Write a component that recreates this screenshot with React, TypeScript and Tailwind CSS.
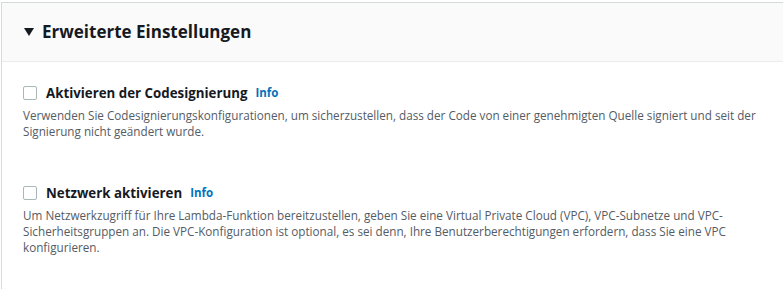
export default function App() {
  return (
    <main className="h-[289px] w-[783px] overflow-hidden bg-white font-['Open_Sans',sans-serif]">
      <section className="ml-px mt-[2px] h-[300px] border-l border-t border-[#d5dbdb] bg-white">
        <div className="flex h-[59px] items-center gap-[8px] border-b border-[#eaeded] bg-[#fafafa] pl-[22px]">
          <svg width="10" height="9" viewBox="0 0 10 9" className="mt-px">
            <path d="M0 0 H10 L5 8 Z" fill="#16191f" />
          </svg>
          <h2 className="text-[17px] font-bold text-[#16191f]">Erweiterte Einstellungen</h2>
        </div>

        <div className="px-[21px] pt-[22px]">
          <div className="flex items-center">
            <span className="h-[14px] w-[14px] rounded-[2px] border border-[#aab7b8] bg-white" />
            <span className="ml-[9px] text-[13.3px] leading-[18px] font-bold text-[#16191f]">Aktivieren der Codesignierung</span>
            <span className="ml-[8px] text-[11.5px] leading-[18px] font-bold text-[#0073bb]">Info</span>
          </div>
          <p className="mt-[5px] text-[11.7px] leading-[16px] text-[#545b64]">
            Verwenden Sie Codesignierungskonfigurationen, um sicherzustellen, dass der Code von einer genehmigten Quelle signiert und seit der Signierung nicht geändert wurde.
          </p>

          <div className="mt-[45px] flex items-center">
            <span className="h-[14px] w-[14px] rounded-[2px] border border-[#aab7b8] bg-white" />
            <span className="ml-[9px] text-[13.3px] leading-[18px] font-bold text-[#16191f]">Netzwerk aktivieren</span>
            <span className="ml-[8px] text-[11.5px] leading-[18px] font-bold text-[#0073bb]">Info</span>
          </div>
          <p className="mt-[5px] text-[11.7px] leading-[16px] text-[#545b64]">
            Um Netzwerkzugriff für Ihre Lambda-Funktion bereitzustellen, geben Sie eine Virtual Private Cloud (VPC), VPC-Subnetze und VPC-Sicherheitsgruppen an. Die VPC-Konfiguration ist optional, es sei denn, Ihre Benutzerberechtigungen erfordern, dass Sie eine VPC konfigurieren.
          </p>
        </div>
      </section>
    </main>
  );
}
